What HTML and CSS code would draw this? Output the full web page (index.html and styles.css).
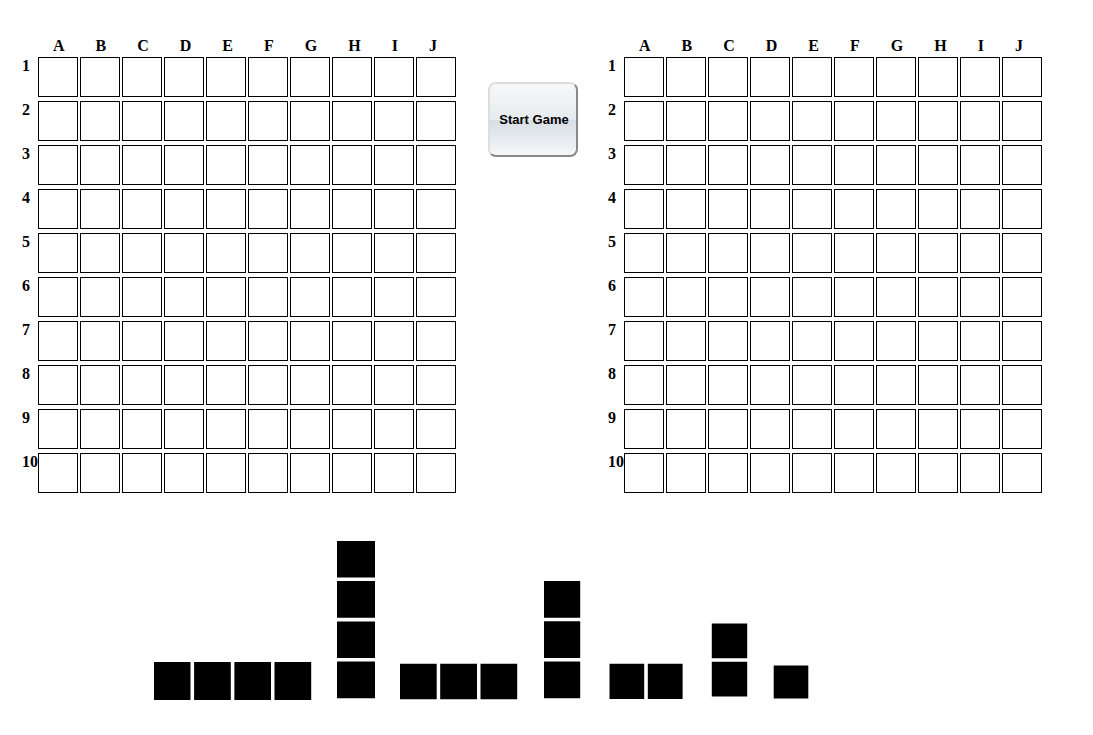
FILE: index.html
```html
<!DOCTYPE html>
<html lang="en">
<head>
<meta charset="utf-8">
<title>Battleship</title>
<link rel="stylesheet" href="styles.css">
<script src="board.js" defer></script>
</head>
<body>
<main>
  <section class="game">
    <table class="board" aria-label="Player board"></table>
    <button class="start" type="button">Start Game</button>
    <table class="board" aria-label="Opponent board"></table>
  </section>
  <section class="fleet" aria-label="Ships">
    <svg class="ship" width="158" height="38" role="img" aria-label="Ship, four across"><path d="M0 0h36.5v38H0zM40.1 0h36.7v38H40.1zM80.4 0H117v38H80.4zM120.5 0h36.7v38h-36.7z"/></svg>
    <svg class="ship" width="38" height="159" role="img" aria-label="Ship, four down"><path d="M0 0h38v36.5H0zM0 40.1h38v36.7H0zM0 80.4h38V117H0zM0 120.5h38v36.7H0z"/></svg>
    <svg class="ship" width="119" height="37" role="img" aria-label="Ship, three across"><path d="M0 .8h36.7v35.4H0zM40.2.8H77v35.4H40.2zM80.5.8h36.7v35.4H80.5z"/></svg>
    <svg class="ship" width="40" height="119" role="img" aria-label="Ship, three down"><path d="M0 0h36.2v36.7H0zM0 40.2h36.2V77H0zM0 80.5h36.2v36.7H0z"/></svg>
    <svg class="ship" width="77" height="37" role="img" aria-label="Ship, two across"><path d="M.5.8h34.7v35.3H.5zM38.8.8h34.8v35.3H38.8z"/></svg>
    <svg class="ship" width="37" height="77" role="img" aria-label="Ship, two down"><path d="M.8.5h35.4v34.7H.8zM.8 38.8h35.4v34.8H.8z"/></svg>
    <svg class="ship" width="36" height="35" role="img" aria-label="Ship, one square"><path d="M.7.6h34.6v33H.7z"/></svg>
  </section>
</main>
</body>
</html>
```

FILE: styles.css
```css
body {
  margin: 0;
  background: #fff;
  color: #000;
  font: 16px/18px "Liberation Serif", "Times New Roman", serif;
}

.game {
  display: flex;
  align-items: flex-start;
  padding: 37px 22px 0;
}

.board,
.board thead,
.board tbody {
  display: block;
}

.board tr {
  display: flex;
}

.board th,
.board td {
  padding: 0;
  box-sizing: border-box;
  text-align: left;
}

.board thead tr {
  gap: 31px;
  padding-left: 31px;
  margin-bottom: 2px;
}

.board tbody tr {
  gap: 2px;
  margin-bottom: 4px;
}

.board tbody th {
  width: 14px;
  white-space: nowrap;
}

.board td {
  width: 40px;
  height: 40px;
  border: 1px solid #000;
}

.start {
  width: 90px;
  height: 75px;
  margin: 45px 30px 0 32px;
  padding: 0 0 0 2px;
  border: 2px solid;
  border-color: #ddd #888 #888 #ddd;
  border-radius: 8px;
  background: linear-gradient(#f6f8f9 0%, #e5ebee 50%, #d7dee3 51%, #f5f7f9 100%);
  color: #000;
  font: bold 13px "Liberation Sans", Arial, sans-serif;
}

.fleet {
  display: flex;
  align-items: flex-end;
  gap: 25px;
  padding: 44px 0 35px 154px;
}

.ship {
  flex: none;
  display: block;
}
```

FILE: board.js
```js
const columns = [..."ABCDEFGHIJ"];

for (const board of document.querySelectorAll(".board")) {
  const head = board.createTHead().insertRow();
  for (const letter of columns) {
    const th = document.createElement("th");
    th.scope = "col";
    th.textContent = letter;
    head.append(th);
  }

  const body = board.createTBody();
  for (let n = 1; n <= 10; n++) {
    const row = body.insertRow();
    const th = document.createElement("th");
    th.scope = "row";
    th.textContent = n;
    row.append(th);
    for (const letter of columns) {
      row.insertCell().dataset.square = letter + n;
    }
  }
}
```
